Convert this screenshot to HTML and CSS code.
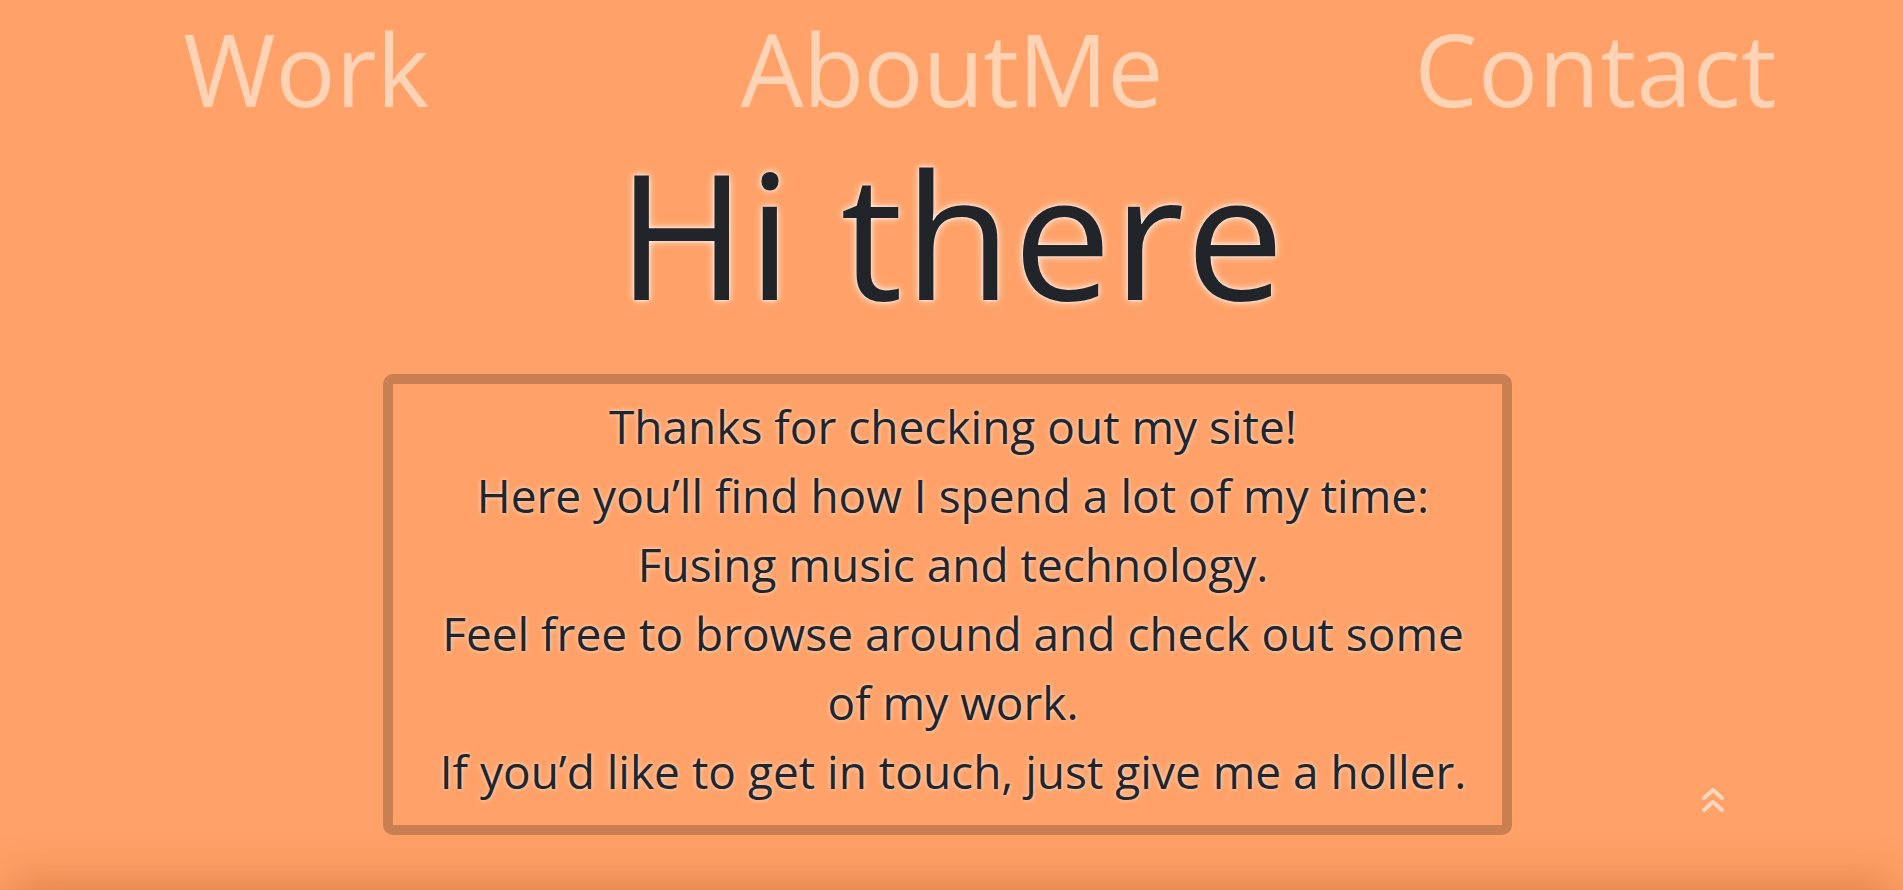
FILE: index.html
```html
<!DOCTYPE html>
<html lang="en">
<head>
<meta charset="utf-8">
<title>Hi there</title>
<link rel="stylesheet" href="styles.css">
</head>
<body>
<section class="hero">
  <nav class="nav">
    <a class="nav-link" href="#work">Work</a>
    <a class="nav-link" href="#about">AboutMe</a>
    <a class="nav-link" href="#contact">Contact</a>
  </nav>
  <h1 class="title">Hi there</h1>
  <div class="intro">
    <p class="intro-text">
      <span class="line">Thanks for checking out my site!</span>
      <span class="line">Here you’ll find how I spend a lot of my time:</span>
      <span class="line">Fusing music and technology.</span>
      <span class="line">Feel free to browse around and check out some</span>
      <span class="line">of my work.</span>
      <span class="line">If you’d like to get in touch, just give me a holler.</span>
    </p>
  </div>
  <a class="to-top" href="#top" aria-label="Back to top">
    <svg width="24" height="26" viewBox="0 0 24 26" fill="none" stroke="currentColor" stroke-width="4" stroke-linecap="round" stroke-linejoin="round">
      <polyline points="3,11 12,3 21,11"/>
      <polyline points="3,23 12,15 21,23"/>
    </svg>
  </a>
</section>
<footer class="next"></footer>
</body>
</html>
```

FILE: styles.css
```css
html, body {
  margin: 0;
  padding: 0;
}

body {
  background: #ffa168;
  font-family: "Open Sans", "Noto Sans", sans-serif;
  color: #212529;
}

.hero {
  position: relative;
  height: 890px;
  display: flex;
  flex-direction: column;
}

.nav {
  display: grid;
  grid-template-columns: repeat(3, 1fr);
  padding-top: 18px;
}

.nav-link {
  justify-self: center;
  font-size: 100px;
  line-height: 100px;
  font-weight: 400;
  color: #ffd3b4;
  text-decoration: none;
}

.nav-link:nth-child(1) { transform: translateX(-11px); }
.nav-link:nth-child(2) { letter-spacing: -0.8px; }
.nav-link:nth-child(3) { transform: translateX(10px); letter-spacing: 0.5px; }

.title {
  margin: 27px 0 0;
  text-align: center;
  font-size: 175px;
  line-height: 175px;
  font-weight: 400;
  color: #212529;
  text-shadow: 0 0 8px rgba(255, 255, 255, 0.9), 0 0 3px rgba(255, 255, 255, 0.8);
  letter-spacing: 1.5px;
}

.intro {
  margin: 54px 0 0 383px;
  width: 1129px;
  box-sizing: border-box;
  border: 10px solid #c97f51;
  border-radius: 10px;
  padding: 8px 0 19px 11px;
}

.intro-text {
  margin: 0;
  text-align: center;
  font-size: 46px;
  line-height: 69px;
  color: #1f262e;
  text-shadow: 0 0 5px rgba(255, 255, 255, 0.75);
}

.line {
  display: block;
  white-space: nowrap;
}

.to-top {
  position: absolute;
  left: 1701px;
  top: 787px;
  color: #ffd9bf;
  display: block;
  line-height: 0;
}

.next {
  height: 200px;
  margin: 0 20px;
  background: #ffa168;
  box-shadow: 0 0 40px 10px rgba(170, 80, 20, 0.35);
}
```
